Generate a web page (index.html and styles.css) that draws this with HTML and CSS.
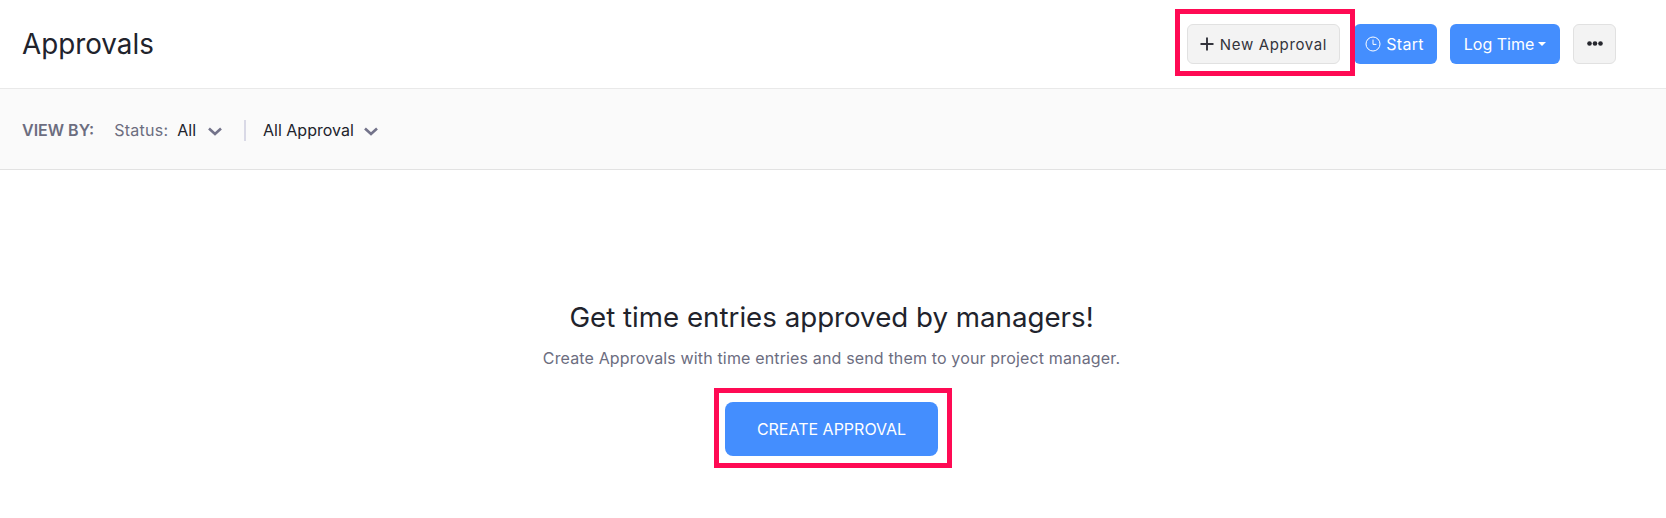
FILE: index.html
```html
<!DOCTYPE html>
<html lang="en">
<head>
<meta charset="utf-8">
<title>Approvals</title>
<link rel="stylesheet" href="styles.css">
</head>
<body>
<header class="topbar">
  <h1 class="title">Approvals</h1>
  <div class="actions">
    <button class="btn btn-light btn-new">
      <svg class="plus" width="14" height="14" viewBox="0 0 14 14"><path d="M7 0.5v13M0.5 7h13" stroke="#33343c" stroke-width="1.9" fill="none"/></svg>
      <span>New Approval</span>
    </button>
    <button class="btn btn-blue btn-start">
      <svg width="16" height="16" viewBox="0 0 16 16" fill="none" stroke="#fff" stroke-width="1"><circle cx="8" cy="8" r="7"/><path d="M8 3.6V8.4H11.4"/></svg>
      <span>Start</span>
    </button>
    <button class="btn btn-blue btn-log"><span>Log Time</span><i class="caret"></i></button>
    <button class="btn btn-light btn-more" aria-label="More">
      <svg width="16" height="5" viewBox="0 0 16 5" fill="#26272e"><circle cx="2.5" cy="2.5" r="2.3"/><circle cx="8" cy="2.5" r="2.3"/><circle cx="13.5" cy="2.5" r="2.3"/></svg>
    </button>
    <div class="mark mark-new"></div>
  </div>
</header>
<section class="filters">
  <span class="viewby">VIEW BY:</span>
  <span class="filter status"><span class="muted">Status:</span><span class="value">All</span>
    <svg class="chev" width="14" height="9" viewBox="0 0 14 9" fill="none" stroke="#73738a" stroke-width="2.6"><path d="M1 1.5l6 5.5 6-5.5"/></svg></span>
  <span class="divider"></span>
  <span class="filter"><span class="value">All Approval</span>
    <svg class="chev chev-tight" width="14" height="9" viewBox="0 0 14 9" fill="none" stroke="#73738a" stroke-width="2.6"><path d="M1 1.5l6 5.5 6-5.5"/></svg></span>
</section>
<main class="empty">
  <h2 class="empty-title">Get time entries approved by managers!</h2>
  <p class="empty-text">Create Approvals with time entries and send them to your project manager.</p>
  <div class="cta-wrap">
    <button class="cta">CREATE APPROVAL</button>
    <div class="mark mark-cta"></div>
  </div>
</main>
</body>
</html>
```
FILE: styles.css
```css
* { box-sizing: border-box; }
html, body { margin: 0; padding: 0; }
body {
  width: 1666px;
  height: 518px;
  overflow: hidden;
  background: #fff;
  color: #21232c;
  font-family: Inter, "Liberation Sans", sans-serif;
}
button { font-family: inherit; cursor: pointer; }
.topbar {
  height: 89px;
  padding: 0 50px 0 22px;
  display: flex;
  align-items: center;
  justify-content: space-between;
  border-bottom: 1px solid #e9e9e9;
}
.title { margin: 0; font-size: 27.8px; font-weight: 400; line-height: 32px; }
.actions { position: relative; display: flex; align-items: center; height: 40px; }
.btn {
  height: 40px;
  border-radius: 6px;
  font-size: 15px;
  display: flex;
  align-items: center;
  justify-content: center;
  padding: 0;
  border: 1px solid transparent;
}
.btn-light { background: #f3f3f3; border-color: #e1e1e1; color: #33343c; }
.btn-blue { background: #448efe; color: #fff; font-size: 16px; }
.btn-new { width: 153px; gap: 6px; margin-right: 14px; letter-spacing: 0.65px; }
.btn-start { width: 83px; gap: 5px; margin-right: 13px; padding-right: 2px; letter-spacing: 0.25px; }
.btn-log { width: 110px; gap: 4px; margin-right: 13px; }
.btn-more { width: 43px; padding-bottom: 2px; }
.caret {
  width: 0; height: 0;
  border-left: 4px solid transparent;
  border-right: 4px solid transparent;
  border-top: 4px solid #fff;
}
.mark { position: absolute; border: 5px solid #ff0a54; pointer-events: none; }
.mark-new { left: -12px; top: -15px; width: 180px; height: 67px; }
.filters {
  height: 81px;
  padding: 2px 22px 0;
  display: flex;
  align-items: center;
  background: #fafafa;
  border-bottom: 1px solid #e2e2e2;
  font-size: 16px;
}
.viewby { font-weight: 600; color: #6c6d7f; font-size: 16px; margin-right: 20px; }
.filter { display: flex; align-items: center; }
.muted { color: #6c6d7f; margin-right: 9px; letter-spacing: 0.25px; }
.value { color: #21232c; }
.chev { margin-left: 12px; margin-top: 2px; }
.chev-tight { margin-left: 10px; }
.divider { width: 2px; height: 21px; background: #d9d9e6; margin: 0 17px 0 22px; }
.empty { display: flex; flex-direction: column; align-items: center; padding: 129px 3px 0 0; }
.empty-title { margin: 0; font-size: 27.7px; font-weight: 400; line-height: 36px; }
.empty-text { margin: 11px 0 0; font-size: 16px; line-height: 24px; color: #6c6d7f; letter-spacing: 0.15px; }
.cta-wrap { position: relative; margin-top: 32px; }
.cta {
  display: block;
  width: 213px;
  height: 54px;
  border: 0;
  border-radius: 8px;
  background: #448efe;
  color: #fff;
  font-size: 16px;
  font-weight: 400;
}
.mark-cta { left: -11px; top: -14px; width: 238px; height: 80px; }
```
